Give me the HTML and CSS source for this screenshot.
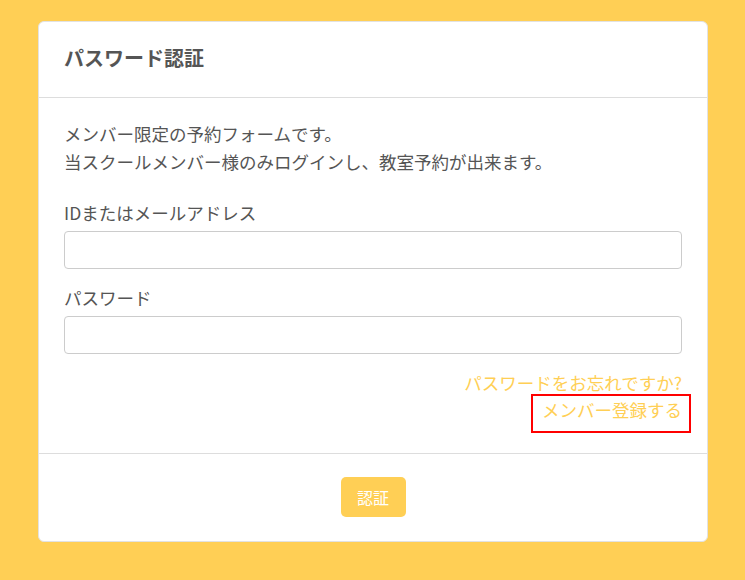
FILE: index.html
```html
<!DOCTYPE html>
<html lang="ja">
<head>
<meta charset="utf-8">
<title>パスワード認証</title>
<link rel="stylesheet" href="styles.css">
</head>
<body>
<div class="card">
  <div class="card-header">
    <h1 class="title">パスワード認証</h1>
  </div>
  <div class="card-body">
    <p class="intro">メンバー限定の予約フォームです。<br>当スクールメンバー様のみログインし、教室予約が出来ます。</p>
    <div class="field">
      <label class="label">IDまたはメールアドレス</label>
      <input class="input" type="text">
    </div>
    <div class="field">
      <label class="label">パスワード</label>
      <input class="input" type="password">
    </div>
    <div class="links">
      <a class="link" href="#">パスワードをお忘れですか?</a>
      <a class="link link-register" href="#">メンバー登録する</a>
    </div>
  </div>
  <div class="card-footer">
    <button class="btn" type="button">認証</button>
  </div>
</div>
</body>
</html>
```

FILE: styles.css
```css
* { box-sizing: border-box; }
html, body { margin: 0; padding: 0; }
body {
  background: #ffcf55;
  font-family: "Noto Sans CJK JP", "Noto Sans", sans-serif;
  color: #555;
  padding: 21px 37px 0 38px;
}
.card {
  background: #fff;
  border: 1px solid #e2e2e2;
  border-radius: 6px;
  width: 670px;
}
.card-header {
  padding: 21px 25px 24px;
  border-bottom: 1px solid #ddd;
}
.title {
  margin: 0;
  font-size: 20px;
  line-height: 30px;
  font-weight: bold;
  color: #555;
}
.card-body {
  padding: 22px 25px 20px;
}
.intro {
  margin: 0 0 23px;
  font-size: 17.5px;
  line-height: 28px;
}
.field {
  display: flex;
  flex-direction: column;
  gap: 4px;
  margin-bottom: 15px;
}
.label {
  font-size: 17.5px;
  line-height: 28px;
}
.input {
  height: 38px;
  border: 1px solid #ccc;
  border-radius: 4px;
  background: #fff;
  padding: 6px 12px;
  font-size: 16px;
  font-family: inherit;
}
.links {
  display: flex;
  flex-direction: column;
  align-items: flex-end;
}
.link {
  color: #ffcf55;
  text-decoration: none;
  font-size: 17.5px;
  line-height: 28px;
}
.link-register {
  display: inline-block;
  border: 2px solid #f00;
  padding: 0 7px 7px 9px;
  margin-top: -3px;
  margin-right: -9px;
}
.card-footer {
  border-top: 1px solid #ddd;
  padding: 23px 0 24px;
  display: flex;
  justify-content: center;
}
.btn {
  background: #ffcf55;
  color: #fff;
  border: none;
  border-radius: 5px;
  height: 40px;
  width: 65px;
  font-size: 16px;
  font-family: inherit;
  padding: 0;
}
```
